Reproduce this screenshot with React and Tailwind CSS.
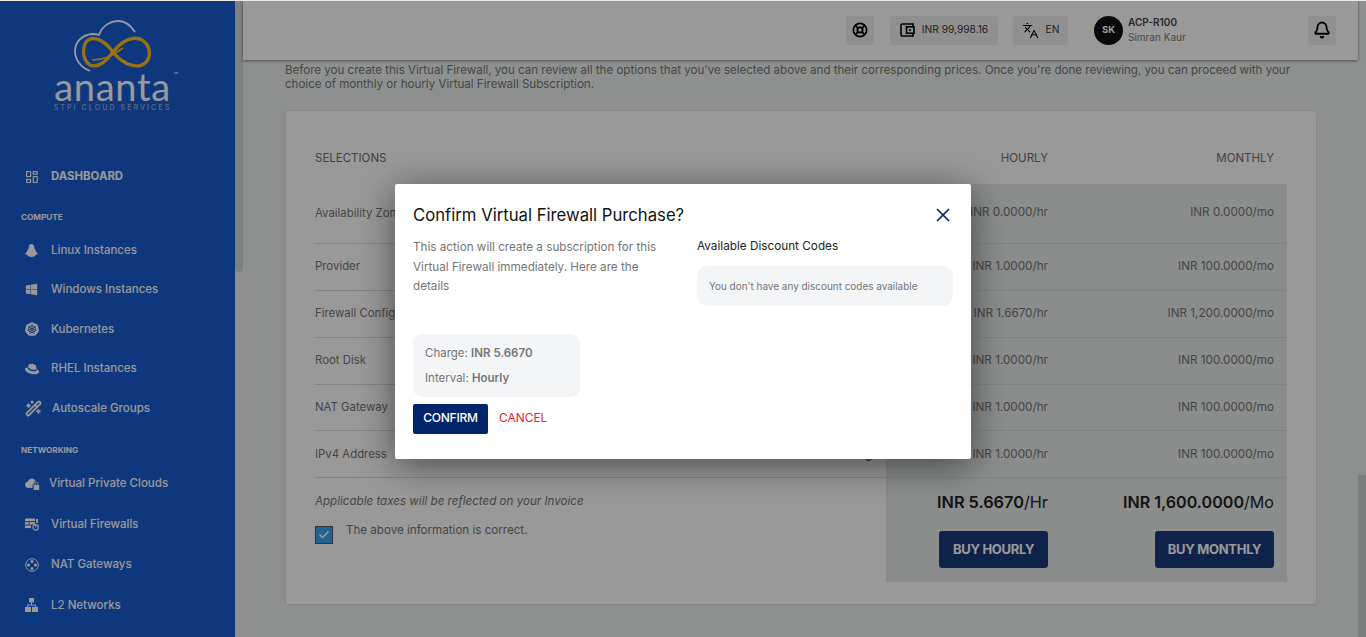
import { Bell, Languages, LifeBuoy, WandSparkles, X, Check } from "lucide-react"
import { FaWindows, FaRedhat } from "react-icons/fa"
import { SiKubernetes } from "react-icons/si"

const DashIcon = () => (
  <svg width="12" height="12" viewBox="0 0 12 12" fill="none" stroke="currentColor" strokeWidth="1.1">
    <rect x="0.6" y="0.6" width="4" height="5" />
    <rect x="7.2" y="0.6" width="4" height="2.6" />
    <rect x="0.6" y="8.4" width="4" height="3" />
    <rect x="7.2" y="5.6" width="4" height="5.8" />
  </svg>
)

const LinuxIcon = () => (
  <svg width="13" height="13" viewBox="0 0 13 13" fill="currentColor">
    <path d="M6.5 0 C8.4 0 9.2 1.6 9.3 3.4 C9.4 5 10.8 6.4 11.6 8.4 L13 9.6 C12.6 10.4 11.8 10.6 11 10.8 C10 12.4 8.4 13 6.5 13 C4.6 13 3 12.4 2 10.8 C1.2 10.6 0.4 10.4 0 9.6 L1.4 8.4 C2.2 6.4 3.6 5 3.7 3.4 C3.8 1.6 4.6 0 6.5 0 Z" />
  </svg>
)

const CloudLockIcon = () => (
  <svg width="15" height="13" viewBox="0 0 15 13" fill="currentColor">
    <path d="M3.4 11 C1.4 11 0 9.6 0 7.8 C0 6.2 1.2 5 2.6 4.8 C3.2 2.8 4.8 1.4 6.8 1.4 C8.8 1.4 10.4 2.8 10.8 4.6 C9.4 4.8 8.6 6 8.6 7.2 C7.8 7.6 7.4 8.2 7.4 9 V11 Z" />
    <rect x="8.6" y="8" width="5.6" height="5" rx="0.6" />
    <path d="M9.9 8 V6.8 C9.9 5.9 10.6 5.4 11.4 5.4 C12.2 5.4 12.9 5.9 12.9 6.8 V8" fill="none" stroke="currentColor" strokeWidth="1" />
  </svg>
)

const FirewallIcon = () => (
  <svg width="14" height="13" viewBox="0 0 14 13" fill="currentColor">
    <rect x="0" y="0.5" width="10" height="2.6" />
    <rect x="0" y="4" width="3.5" height="2.6" />
    <rect x="4.4" y="4" width="5.6" height="2.6" />
    <rect x="0" y="7.5" width="6" height="2.6" />
    <rect x="11" y="1" width="2" height="4" />
    <circle cx="10.6" cy="9.4" r="2.7" fill="none" stroke="currentColor" strokeWidth="1.2" />
    <rect x="10.2" y="7" width="0.9" height="2.6" />
  </svg>
)

const NatIcon = () => (
  <svg width="14" height="14" viewBox="0 0 14 14" fill="currentColor">
    <circle cx="7" cy="7" r="6.3" fill="none" stroke="currentColor" strokeWidth="1" />
    <circle cx="7" cy="3.6" r="1.5" />
    <circle cx="7" cy="10.4" r="1.5" />
    <circle cx="3.6" cy="7" r="1.5" />
    <circle cx="10.4" cy="7" r="1.5" />
  </svg>
)

const L2Icon = () => (
  <svg width="13" height="14" viewBox="0 0 13 14" fill="currentColor">
    <rect x="4" y="0" width="5" height="4.4" />
    <rect x="6" y="4" width="1" height="3" />
    <rect x="2" y="6.6" width="9" height="1" />
    <rect x="2" y="7" width="1" height="2" />
    <rect x="10" y="7" width="1" height="2" />
    <rect x="0" y="9" width="6" height="5" />
    <rect x="7" y="9" width="6" height="5" />
  </svg>
)

const WalletIcon = () => (
  <svg width="15" height="14" viewBox="0 0 15 14" fill="none" stroke="#000" strokeWidth="1.6">
    <path d="M13 3.5 V1 H2 Q1 1 1 2 V12 Q1 13 2 13 H13 V10.5" />
    <rect x="6.5" y="3.8" width="7.5" height="6.4" />
    <rect x="9" y="6.2" width="2" height="1.6" fill="#000" stroke="none" />
  </svg>
)

const Logo = () => (
  <div className="flex flex-col items-center w-[125px] ml-[50px] h-[156px] pt-[18px]">
    <svg width="80" height="55" viewBox="0 0 80 55" fill="none" className="ml-[3px] flex-none">
      <path
        d="M16 53 C6 49 1 41 1 33 C1 24 8 17 18 16 C20 16 23 16 25 17 C28 8 36 3 45 3 C51 3 57 8 61 14"
        stroke="#fff"
        strokeWidth="1.8"
      />
      <path
        d="M39 34 C32 24 23 19 16 21 C8 24 7 41 16 47 C26 51 34 41 39 34 C46 25 56 18 66 21 C75 25 78 35 73 43 C66 52 50 48 39 34"
        stroke="#ffbc1f"
        strokeWidth="3.4"
      />
      <path d="M18 42 C30 42 38 38 49 30" stroke="#ffbc1f" strokeWidth="1.6" />
    </svg>
    <div className="relative text-[38px] leading-[30px] font-['Lato'] font-normal text-white tracking-[0.7px] mt-[-2px] whitespace-nowrap">
      ananta
      <span className="absolute right-[-8px] top-[-1px] text-[6px] leading-[8px]">™</span>
    </div>
    <div className="text-[7px] leading-[9px] font-medium text-[#a9b4c9] tracking-[2.1px] whitespace-nowrap mt-[2px]">
      STPI CLOUD SERVICES
    </div>
  </div>
)

const computeItems = [
  { label: "Linux Instances", icon: <LinuxIcon />, text: "" },
  { label: "Windows Instances", icon: <FaWindows size={13} />, text: "" },
  { label: "Kubernetes", icon: <SiKubernetes size={14} />, text: "" },
  { label: "RHEL Instances", icon: <FaRedhat size={14} />, text: "" },
  { label: "Autoscale Groups", icon: <WandSparkles size={17} strokeWidth={2.5} />, text: "ml-[1px]" },
]

const networkItems = [
  { label: "Virtual Private Clouds", icon: <CloudLockIcon />, text: "ml-[-2px]" },
  { label: "Virtual Firewalls", icon: <FirewallIcon />, text: "" },
  { label: "NAT Gateways", icon: <NatIcon />, text: "" },
  { label: "L2 Networks", icon: <L2Icon />, text: "" },
]

const NavItem = ({ item, h }) => (
  <div className={h + " flex items-center pl-[25px] text-white text-[11.5px] font-medium"}>
    <span className="w-[26px] flex-none flex items-center">{item.icon}</span>
    <span className={item.text + " whitespace-nowrap"}>{item.label}</span>
  </div>
)

const Sidebar = () => (
  <div className="w-[235px] flex-none bg-[#195cd3] h-full overflow-hidden">
    <Logo />
    <div className="flex items-center h-[41px] pl-[26px] text-white text-[11.4px] font-bold">
      <span className="w-[25px]">
        <DashIcon />
      </span>
      DASHBOARD
    </div>
    <div className="pl-[21px] text-white text-[8.2px] font-bold leading-[12px] mt-[14px] mb-[7.5px]">COMPUTE</div>
    {computeItems.map((item) => (
      <NavItem key={item.label} item={item} h="h-[39.5px]" />
    ))}
    <div className="pl-[21px] text-white text-[8.2px] font-bold leading-[12px] mt-[15.5px] mb-[8px]">NETWORKING</div>
    {networkItems.map((item) => (
      <NavItem key={item.label} item={item} h="h-[40.5px]" />
    ))}
  </div>
)

const Pill = ({ className, children }) => (
  <div className={"h-[29px] bg-[#f0f1f1] rounded-[3px] flex items-center justify-center " + className}>{children}</div>
)

const Header = () => (
  <div className="h-[60px] flex-none bg-white shadow-[0_1px_3px_rgba(0,0,0,0.45)] flex items-center relative">
    <Pill className="w-[28px] ml-[603px]">
      <LifeBuoy size={16} strokeWidth={2.6} className="text-black" />
    </Pill>
    <Pill className="w-[108px] ml-[16px] gap-[7px]">
      <WalletIcon />
      <span className="text-[10.2px] text-[#333]">INR 99,998.16</span>
    </Pill>
    <Pill className="w-[55px] ml-[15px] gap-[7px]">
      <Languages size={17} strokeWidth={1.5} className="text-black" />
      <span className="text-[10.2px] text-[#333]">EN</span>
    </Pill>
    <div className="w-[29px] h-[29px] rounded-full bg-[#111] text-white text-[9.5px] font-bold flex items-center justify-center ml-[26px]">
      SK
    </div>
    <div className="ml-[5px] flex flex-col">
      <span className="text-[10px] leading-[15px] font-semibold text-[#444]">ACP-R100</span>
      <span className="text-[10px] leading-[15px] text-[#777]">Simran Kaur</span>
    </div>
    <Pill className="w-[28px] ml-auto mr-[22px]">
      <Bell size={18} strokeWidth={2.4} className="text-black" />
    </Pill>
  </div>
)

const rows = [
  { label: "Availability Zone", hr: "INR 0.0000/hr", mo: "INR 0.0000/mo", h: "h-[60px]", nudge: "pb-[1px]" },
  { label: "Provider", hr: "INR 1.0000/hr", mo: "INR 100.0000/mo", h: "h-[47px]", nudge: "pb-[1px]" },
  { label: "Firewall Config", hr: "INR 1.6670/hr", mo: "INR 1,200.0000/mo", h: "h-[47px]", nudge: "pb-[1px]" },
  { label: "Root Disk", hr: "INR 1.0000/hr", mo: "INR 100.0000/mo", h: "h-[47px]", nudge: "pb-[1px]" },
  { label: "NAT Gateway", hr: "INR 1.0000/hr", mo: "INR 100.0000/mo", h: "h-[46px]", nudge: "" },
  { label: "IPv4 Address", hr: "INR 1.0000/hr", mo: "INR 100.0000/mo", h: "h-[47px]", nudge: "pt-[1px]", tail: "g" },
]

const Card = () => (
  <div className="mt-[19px] h-[495px] ml-[42px] mr-[41px] bg-white border border-[#dfe1e0] rounded-[3px] px-[29px] pt-[30px]">
    <div className="flex h-[43px] text-[11.5px] text-[#707070]">
      <div className="w-[571px] pt-[9px]">SELECTIONS</div>
      <div className="w-[162px] text-right pt-[9px]">HOURLY</div>
      <div className="w-[226px] text-right pt-[9px]">MONTHLY</div>
    </div>
    {rows.map((r) => (
      <div key={r.label} className={"flex text-[11.7px] text-[#757575] border-b border-[#d9dcdb] " + r.h}>
        <div className="w-[571px] flex items-center justify-between pr-[14px] text-[11.4px]">
          <span className={r.nudge === "pt-[1px]" ? "pt-[2px]" : r.nudge === "" ? "pt-[1px]" : ""}>{r.label}</span>
          {r.tail && <span className="text-[#333] pt-[2px]">{r.tail}</span>}
        </div>
        <div className={"flex-1 flex items-center bg-[#e6ebe8] pr-[13px] " + r.nudge}>
          <div className="w-[162px] text-right">{r.hr}</div>
          <div className="flex-1 text-right">{r.mo}</div>
        </div>
      </div>
    ))}
    <div className="flex h-[104px]">
      <div className="w-[571px] pt-[15px] text-[11.6px] text-[#757575]">
        <div className="italic leading-[16px]">Applicable taxes will be reflected on your Invoice</div>
        <div className="flex mt-[17px]">
          <div className="w-[18px] h-[18px] bg-[#3aa5f5] border border-[#555] flex items-center justify-center">
            <Check size={12} strokeWidth={3.5} className="text-white" />
          </div>
          <span className="ml-[13px] leading-[16px] mt-[-4px]">The above information is correct.</span>
        </div>
      </div>
      <div className="flex-1 bg-[#e6ebe8] pr-[13px] flex">
        <div className="w-[162px] flex flex-col items-end pt-[14px]">
          <div className="text-[16.3px] leading-[20px] text-[#222]">
            <b className="font-semibold">INR 5.6670</b>/Hr
          </div>
          <div className="mt-[19px] w-[109px] h-[37px] bg-[#1a397b] rounded-[3px] text-white text-[13px] tracking-[-0.3px] font-bold flex items-center justify-center">
            BUY HOURLY
          </div>
        </div>
        <div className="flex-1 flex flex-col items-end pt-[14px]">
          <div className="text-[16.1px] leading-[20px] text-[#222]">
            <b className="font-semibold">INR 1,600.0000</b>/Mo
          </div>
          <div className="mt-[19px] w-[119px] h-[37px] bg-[#1a397b] rounded-[3px] text-white text-[13px] tracking-[-0.3px] font-bold flex items-center justify-center">
            BUY MONTHLY
          </div>
        </div>
      </div>
    </div>
  </div>
)

const Modal = () => (
  <div className="w-[576px] h-[275px] bg-white rounded-[2px] shadow-[0_6px_36px_rgba(0,0,0,0.5)] px-[18px] pt-[20px]">
    <div className="flex items-center justify-between h-[22px]">
      <span className="text-[16.7px] leading-[22px] text-[#111]">Confirm Virtual Firewall Purchase?</span>
      <X size={22} strokeWidth={1.9} className="text-[#00256a] mr-[-1px]" />
    </div>
    <div className="flex mt-[11px]">
      <div className="w-[284px]">
        <p className="w-[250px] text-[11.7px] leading-[19.5px] text-[#757575] mt-[1px]">
          This action will create a subscription for this Virtual Firewall immediately. Here are the details
        </p>
        <div className="w-[167px] h-[63px] bg-[#f4f5f7] rounded-[9px] mt-[37px] pl-[12px] pt-[7px] text-[11.5px] text-[#757575] leading-[25px]">
          <div>
            Charge: <b className="font-semibold">INR 5.6670</b>
          </div>
          <div>
            Interval: <b className="font-semibold">Hourly</b>
          </div>
        </div>
        <div className="flex items-center mt-[7px]">
          <div className="w-[75px] h-[30px] pb-[1px] bg-[#00256a] rounded-[2px] text-white text-[12px] tracking-[-0.2px] font-medium flex items-center justify-center">
            CONFIRM
          </div>
          <span className="ml-[11px] pb-[1px] text-[12px] tracking-[-0.05px] text-[#f0202a]">CANCEL</span>
        </div>
      </div>
      <div className="w-[256px]">
        <div className="text-[11.75px] leading-[16px] text-[#222] mt-[1px]">Available Discount Codes</div>
        <div className="h-[40px] mt-[12px] bg-[#f4f5f7] rounded-[10px] flex items-center pl-[12px] text-[9.95px] text-[#757575]">
          You don't have any discount codes available
        </div>
      </div>
    </div>
  </div>
)

export default function App() {
  return (
    <div className="relative h-[637px] w-full overflow-hidden font-['Inter',sans-serif] bg-[#edf1ef]">
      <div className="flex h-full">
        <Sidebar />
        <div className="w-[8px] flex-none bg-[#eeeeee]">
          <div className="h-[272px] bg-[#d4d5d6] rounded-b-[4px]"></div>
        </div>
        <div className="flex-1 flex flex-col min-w-0">
          <Header />
          <div className="pl-[42px] pr-[42px] pt-[3px] text-[11.55px] leading-[14px] text-[#757575]">
            Before you create this Virtual Firewall, you can review all the options that you've selected above and their
            corresponding prices. Once you're done reviewing, you can proceed with your choice of monthly or hourly
            Virtual Firewall Subscription.
          </div>
          <Card />
        </div>
        <div className="w-[8px] flex-none flex flex-col justify-end">
          <div className="h-[162px] bg-[#cfd0d1]"></div>
        </div>
      </div>
      <div className="absolute inset-x-0 top-0 h-[1px] bg-[#e7e9de]"></div>
      <div className="absolute inset-0 top-[1px] bg-black/40 flex justify-center items-start pt-[183px]">
        <Modal />
      </div>
    </div>
  )
}
